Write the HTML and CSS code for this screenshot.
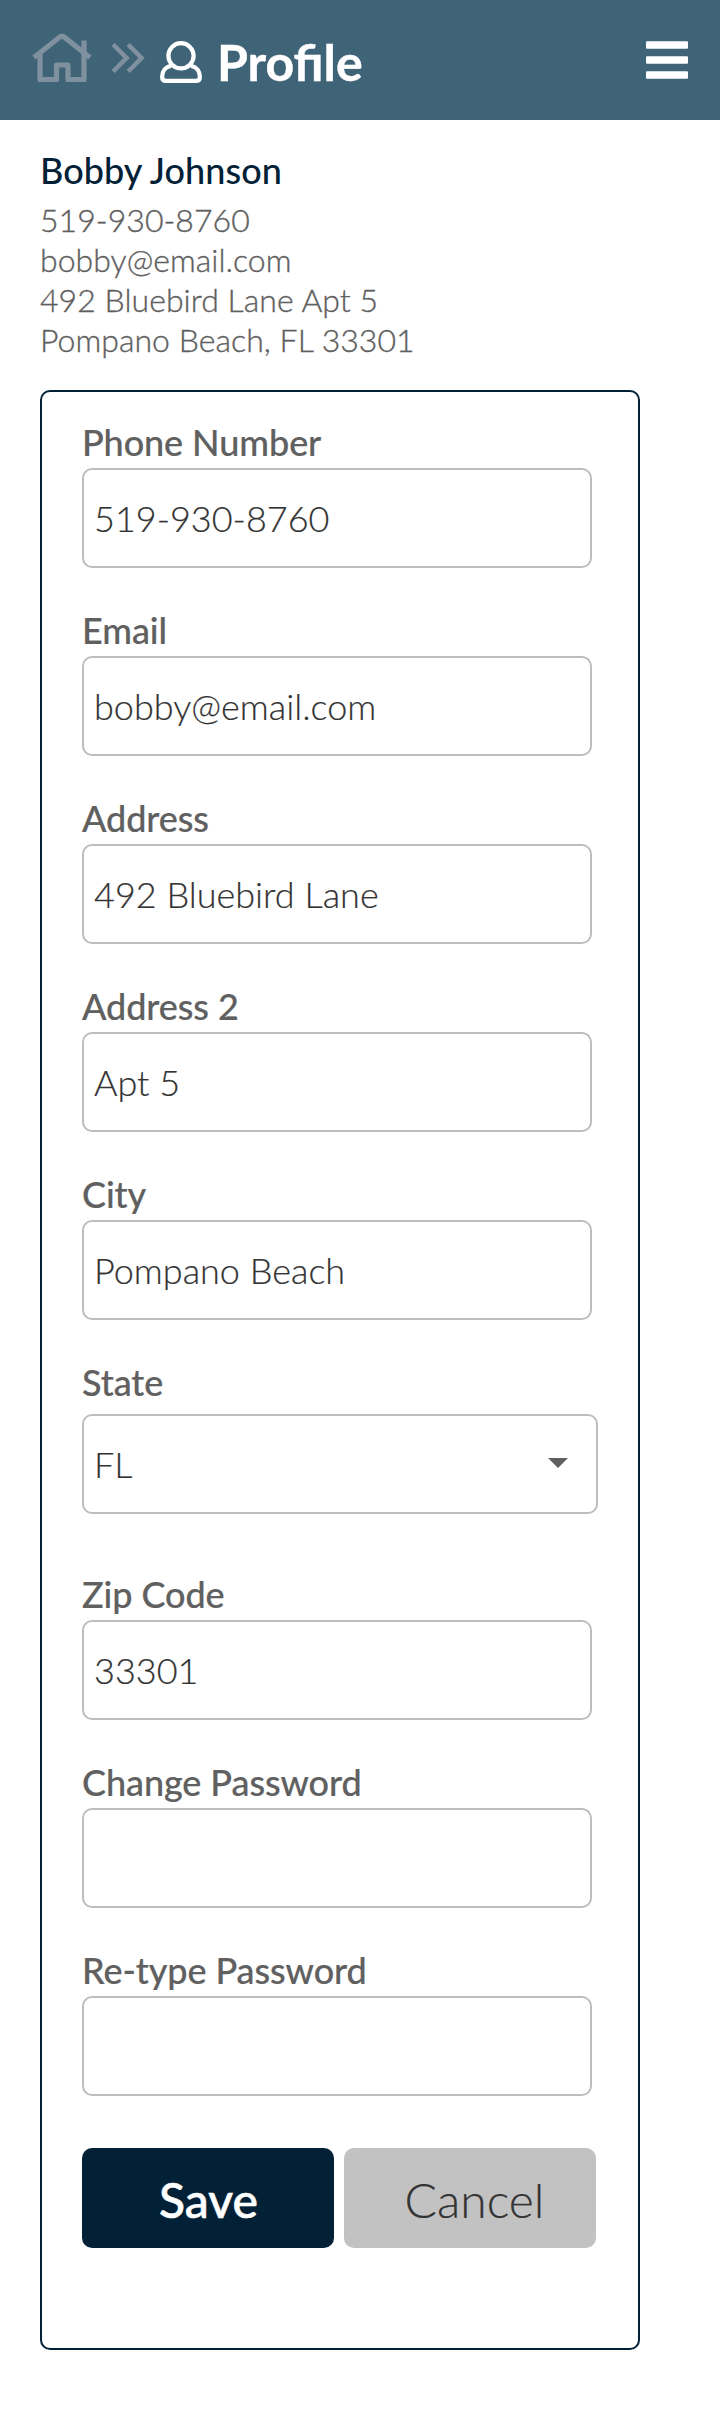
FILE: index.html
```html
<!DOCTYPE html>
<html lang="en">
<head>
<meta charset="utf-8">
<title>Profile</title>
<link rel="stylesheet" href="styles.css">
</head>
<body>
<header class="topbar">
  <svg class="home" viewBox="0 0 60 50" fill="none" stroke="#7f919f" stroke-width="5.200" stroke-linejoin="round">
    <path d="M2 24.500 L27.500 4.200 Q30 2.400 32.500 4.200 L58 24.500"/>
    <path d="M8 21 V46.500 H24.500 V32 H36 V46.500 H52 V7.500"/>
  </svg>
  <svg class="chevrons" viewBox="0 0 34 32" fill="none" stroke="#7f919f" stroke-width="4.600">
    <path d="M2.200 2.500 L15.500 16 L2.200 29.500 M17.200 2.500 L30.500 16 L17.200 29.500"/>
  </svg>
  <svg class="user" viewBox="0 0 42 42" fill="none" stroke="#fff" stroke-width="4.200" stroke-linejoin="round">
    <circle cx="21" cy="14.800" r="12.600"/>
    <path d="M11 25 C5 26 2.100 30.500 2.100 36 Q2.100 39.900 6 39.900 H36 Q39.900 39.900 39.900 36 C39.900 30.500 37 26 31 25"/>
  </svg>
  <h1 class="title">Profile</h1>
  <svg class="menu" viewBox="0 0 42 38" fill="#fff">
    <rect y="0.300" width="42" height="7.400" rx="1"/>
    <rect y="15.300" width="42" height="7.400" rx="1"/>
    <rect y="30.300" width="42" height="7.400" rx="1"/>
  </svg>
</header>
<main class="page">
  <h2 class="name">Bobby Johnson</h2>
  <address class="info">519-930-8760<br>bobby@email.com<br>492 Bluebird Lane Apt 5<br>Pompano Beach, FL 33301</address>
  <form class="card">
    <label class="field"><span class="label">Phone Number</span><input class="input" value="519-930-8760"></label>
    <label class="field"><span class="label">Email</span><input class="input" value="bobby@email.com"></label>
    <label class="field"><span class="label">Address</span><input class="input" value="492 Bluebird Lane"></label>
    <label class="field"><span class="label">Address 2</span><input class="input" value="Apt 5"></label>
    <label class="field"><span class="label">City</span><input class="input" value="Pompano Beach"></label>
    <div class="field field-state"><span class="label">State</span>
      <div class="select"><span>FL</span><svg class="caret" viewBox="0 0 20 10" fill="#606060"><path d="M0 0 H20 L10 10 Z"/></svg></div>
    </div>
    <label class="field"><span class="label">Zip Code</span><input class="input" value="33301"></label>
    <label class="field"><span class="label">Change Password</span><input class="input" type="password"></label>
    <label class="field"><span class="label">Re-type Password</span><input class="input" type="password"></label>
    <div class="actions">
      <button class="btn save" type="button">Save</button>
      <button class="btn cancel" type="button">Cancel</button>
    </div>
  </form>
</main>
</body>
</html>
```
FILE: styles.css
```css
* { box-sizing: border-box; }
body {
  margin: 0;
  background: #fff;
  font-family: Lato, "Liberation Sans", sans-serif;
}
.topbar {
  display: flex;
  align-items: flex-start;
  height: 120px;
  padding: 0 32px;
  background: #3f6477;
}
.topbar svg { flex: none; }
.home { width: 60px; height: 50px; margin-top: 33px; }
.chevrons { width: 34px; height: 32px; margin: 42px 0 0 19px; }
.user { width: 42px; height: 42px; margin: 41px 0 0 15px; }
.title {
  margin: 32px 0 0 15px;
  color: #fff;
  font-size: 50px;
  font-weight: 700;
  line-height: 60px;
  -webkit-text-stroke: 0.4px;
}
.menu { width: 42px; height: 38px; margin: 41px 0 0 auto; }
.page { padding: 29px 40px 60px; }
.name {
  margin: 0 0 8px;
  color: #022137;
  font-size: 36px;
  font-weight: 500;
  line-height: 43px;
  letter-spacing: 0.07px;
}
.info {
  color: #606060;
  font-size: 32px;
  font-style: normal;
  font-weight: 300;
  line-height: 40px;
  letter-spacing: 0.04px;
  -webkit-text-stroke: 0.35px;
}
.card {
  width: 600px;
  height: 1960px;
  margin-top: 30px;
  padding: 28px 40px;
  border: 2px solid #022137;
  border-radius: 10px;
}
.field { display: block; height: 188px; }
.label {
  display: block;
  height: 48px;
  padding-top: 1px;
  color: #606060;
  font-size: 36px;
  font-weight: 500;
  line-height: 43px;
  letter-spacing: -0.08px;
  -webkit-text-stroke: 0.2px;
}
.input, .select {
  display: block;
  width: 510px;
  height: 100px;
  padding: 0 10px;
  border: 2px solid #bdbdbd;
  border-radius: 10px;
  background: #fff;
  color: #333;
  font-family: inherit;
  font-size: 36px;
  font-weight: 300;
  -webkit-text-stroke: 0.2px;
}
.field-state { height: 212px; }
.field-state .label { height: 54px; }
.select {
  display: flex;
  align-items: center;
  justify-content: space-between;
  width: 516px;
  padding-right: 28px;
}
.caret { width: 20px; height: 10px; margin-top: -3px; }
.actions { display: flex; gap: 10px; margin-top: 12px; }
.btn {
  width: 252px;
  height: 100px;
  padding: 2px 0 0;
  border: 0;
  border-radius: 10px;
  font-family: inherit;
  font-size: 48px;
}
.save { padding-left: 1px; background: #022137; color: #fff; font-weight: 500; -webkit-text-stroke: 0.6px; }
.cancel { padding-left: 9px; background: #c2c2c2; color: #333; font-weight: 300; -webkit-text-stroke: 0.2px; }
```
